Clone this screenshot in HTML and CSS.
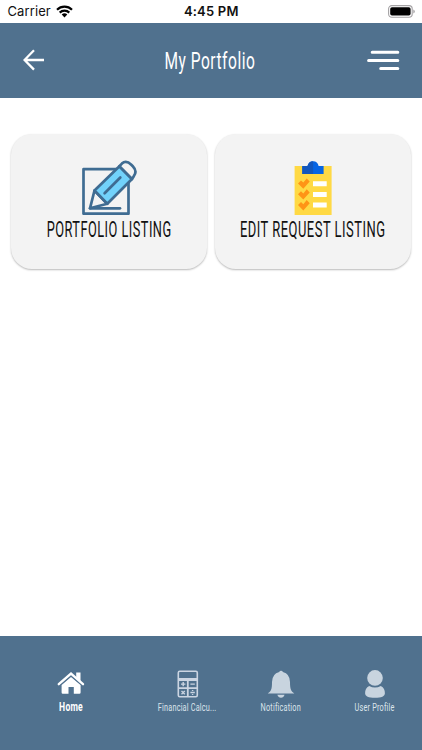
FILE: index.html
```html
<!DOCTYPE html>
<html lang="en">
<head>
<meta charset="utf-8">
<title>My Portfolio</title>
<link rel="stylesheet" href="styles.css">
</head>
<body>
<div class="status">
  <div class="carrier"><span>Carrier</span>
    <svg width="17" height="13" viewBox="0 0 17 13"><g fill="none" stroke="#000" stroke-width="2.2"><path d="M1 4.7a10.7 10.7 0 0 1 15 0"/><path d="M3.7 7.6a6.8 6.8 0 0 1 9.6 0"/></g><path d="M5.7 9.6a4 4 0 0 1 5.6 0L8.5 12.4z"/></svg>
  </div>
  <div class="clock">4:45 PM</div>
  <svg class="battery" width="27" height="13" viewBox="0 0 27 13"><rect x=".6" y=".6" width="23.6" height="11.6" rx="3.2" fill="#fff" stroke="#a5a3a5" stroke-width="1.1"/><rect x="2.2" y="2.2" width="20.4" height="8.4" rx="1.8"/><path d="M25.3 4.4q1.5.6 1.5 2t-1.5 2z" fill="#a5a3a5"/></svg>
</div>
<header class="header">
  <svg width="22" height="22" viewBox="0 0 22 22"><path d="M11 1.2L1.5 11 11 20.6M1.5 11H21" fill="none" stroke="#fff" stroke-width="2.3"/></svg>
  <h1 class="title">My Portfolio</h1>
  <svg width="33" height="21" viewBox="0 0 33 21"><path d="M5.2 2.2h25.6M1.6 10.5h29.2M13.7 18.6h17.1" stroke="#fff" stroke-width="3" stroke-linecap="round"/></svg>
</header>
<main class="cards">
  <section class="card">
    <svg width="56" height="56" viewBox="0 0 56 56"><g fill="none" stroke="#3f6c92" stroke-width="2.7" stroke-linejoin="round" stroke-linecap="round"><path d="M2.5 9.2h45v44.5h-45z"/><path d="M9 48.3h30"/><path d="M13.5 30.5L9 48.3l17.3-4.5z" fill="#f3f3f3"/><path d="M13.5 30.5L38.4 6.2 51 19 26.3 43.8z" fill="#72d2fb"/><path d="M38.4 6.2l2.5-2.6q4.2-4 9.4 1.2l1.5 1.5q4.8 5 1 9.9L51 19z" fill="#f3f3f3"/><path d="M23.6 33.2L39.3 17.5"/></g></svg>
    <span class="label portfolio">PORTFOLIO LISTING</span>
  </section>
  <section class="card">
    <svg width="56" height="56" viewBox="0 0 56 56"><path d="M9.6 6h37v49h-37z" fill="#ffd944"/><path d="M17.3 6h5.2q1-4.8 5.6-4.8T33.6 6h5v8H17.3z" fill="#0765e4"/><path d="M17.3 6h5.2q1-4.8 5.6-4.8V14H17.3z" fill="#1357bd"/><path d="M28 21.2h13.7v5H28zM28 32h13.7v5H28zM28 42.6h13.7v5H28z" fill="#fff"/><g fill="#ff9416"><path id="tick" d="M13 23.4l3-3 2.3 2.2 3.4-4.2 3 3.2-6.4 7.2z"/><use href="#tick" y="10.8"/><use href="#tick" y="21.6"/></g></svg>
    <span class="label request">EDIT REQUEST LISTING</span>
  </section>
</main>
<nav class="tabs">
  <a class="tab home">
    <svg width="28" height="28" viewBox="0 0 28 28" fill="#fff"><path d="M14 7l9.6 8v7.6q0 1.2-1.2 1.2h-5.6v-6.9h-5.3v6.9H5.8q-1.2 0-1.2-1.2V15z"/><path d="M1.8 14.2L14 3.6l12 10.6" fill="none" stroke="#fff" stroke-width="2.4" stroke-linecap="round"/><path d="M19.2 2.5h4.3v9.4l-4.3-3.8z"/><path d="M3.4 15.4L14 6.2l10.6 9.2" fill="none" stroke="#50718e" stroke-width=".5"/></svg>
    <span>Home</span>
  </a>
  <a class="tab calc">
    <svg width="28" height="28" viewBox="0 0 28 28" fill="none"><rect x="4.3" y="1.3" width="19" height="25.4" rx="1.4" stroke="#cbd5e2" stroke-width="1.6"/><path d="M4 8.8h19.5M4 10h19.5M13.8 9v17M4 18.2h19.5" stroke="#cbd5e2" stroke-width="1.8"/><path d="M7 14.1h4.4M9.2 11.9v4.4M16.4 14.1h4.4M7.5 20.9l3.3 3.3M10.8 20.9l-3.3 3.3M16.4 22.5h4.4M18.6 20v.9M18.6 24.1v.9" stroke="#cbd5e2" stroke-width="1.4"/></svg>
    <span>Financial Calcu...</span>
  </a>
  <a class="tab bell">
    <svg width="28" height="28" viewBox="0 0 28 28" fill="#c8d4df"><path d="M12.2 2a2 2 0 0 1 3.7 0q7 1.8 7.1 10c0 7 1 9.3 4.3 11.4H.8C4.2 21.3 5 19 5 12q.2-8.2 7.2-10zM10.3 24.7h7.3q-1 3-3.6 3t-3.7-3z"/></svg>
    <span>Notification</span>
  </a>
  <a class="tab user">
    <svg width="28" height="28" viewBox="0 0 28 28" fill="#c8d4df"><circle cx="14" cy="7.9" r="7.8"/><path d="M8.2 15.9q5.8 3.4 11.6 0c3 1.4 4.1 4.1 4.1 7.3 0 3-3.4 4.6-9.9 4.6s-9.9-1.6-9.9-4.6c0-3.2 1.1-5.9 4.1-7.3z"/></svg>
    <span>User Profile</span>
  </a>
</nav>
</body>
</html>
```
FILE: styles.css
```css
* { box-sizing: border-box; }

body {
  margin: 0;
  height: 750px;
  display: flex;
  flex-direction: column;
  background: #fff;
  font-family: Roboto, sans-serif;
  overflow: hidden;
}

svg { display: block; flex: none; }

.status {
  height: 22.5px;
  flex: none;
  display: grid;
  grid-template-columns: 1fr auto 1fr;
  padding: 0 7px 0 7.5px;
  font: 13px/23px Inter, sans-serif;
  color: #111;
}

.carrier { display: flex; gap: 5px; letter-spacing: 0.1px; }
.carrier svg { margin-top: 5px; }
.clock { font-weight: 600; letter-spacing: 0.2px; white-space: pre; }
.battery { justify-self: end; margin-top: 5px; }

.header {
  height: 75px;
  flex: none;
  display: flex;
  align-items: center;
  justify-content: space-between;
  padding: 0 22px 0 23px;
  background: #50718e;
}

.header > :first-child { margin-right: 8px; }

.title {
  margin: 1px 0 0;
  font-size: 23.5px;
  font-weight: 400;
  letter-spacing: 0.8px;
  color: #fff;
  white-space: nowrap;
  transform: scaleX(0.66);
}

.cards {
  flex: 1;
  display: grid;
  grid-template-columns: 1fr 1fr;
  align-content: start;
  gap: 8.5px;
  padding: 36px 11px 0;
}

.card {
  height: 135px;
  min-width: 0;
  display: flex;
  flex-direction: column;
  align-items: center;
  padding-top: 26px;
  border-radius: 21px;
  background: #f3f3f3;
  box-shadow: 0 1px 2px rgba(0, 0, 0, 0.28);
}

.label {
  margin-top: 1px;
  font-size: 21.5px;
  line-height: 26px;
  letter-spacing: 0.8px;
  color: #111;
  white-space: nowrap;
}

.portfolio { transform: scaleX(0.594); }
.request { transform: scaleX(0.603); }

.tabs {
  height: 114px;
  flex: none;
  display: grid;
  grid-template-columns: 141px 93px 94px 94px;
  padding-top: 34px;
  background: #50718e;
}

.tab {
  display: flex;
  flex-direction: column;
  align-items: center;
  min-width: 0;
  color: #dce4eb;
  font-size: 11.5px;
  line-height: 18px;
  letter-spacing: 0.3px;
  white-space: nowrap;
}

.tab span { transform: scaleX(0.635); }
.home { color: #fff; font-size: 13px; font-weight: 700; }
.home span { transform: scaleX(0.66); }
```
